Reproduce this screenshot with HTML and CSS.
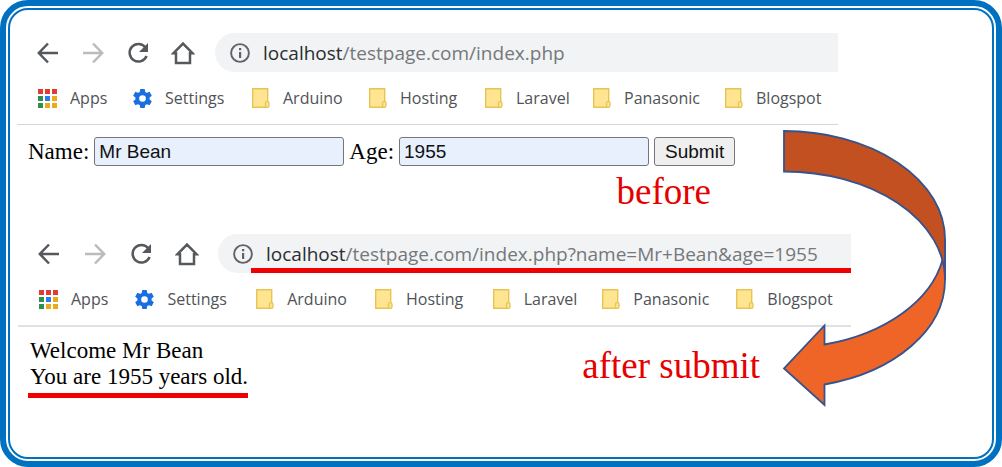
FILE: index.html
```html
<!DOCTYPE html>
<html lang="en">
<head>
<meta charset="utf-8">
<title>Form submit with GET</title>
<link rel="stylesheet" href="styles.css">
</head>
<body>
<svg class="sprite" aria-hidden="true">
  <symbol id="back" viewBox="0 0 24 24"><path d="M22 12H3.500M12 2.500 2.800 12l9.200 9.500" fill="none" stroke="currentColor" stroke-width="2.500"/></symbol>
  <symbol id="forward" viewBox="0 0 24 24"><path d="M2 12h18.500M12 2.500l9.200 9.500-9.200 9.500" fill="none" stroke="currentColor" stroke-width="2.500"/></symbol>
  <symbol id="reload" viewBox="0 0 24 24"><path d="M19.300 6.200A8.800 8.800 0 1 0 20.600 15" fill="none" stroke="currentColor" stroke-width="2.500"/><path d="M22 2v9h-9z" fill="currentColor"/></symbol>
  <symbol id="home" viewBox="0 0 24 24"><path d="M2.500 12.200 12 2.600l9.500 9.600H19V22H5v-9.800z" fill="none" stroke="currentColor" stroke-width="2.500"/></symbol>
  <symbol id="info" viewBox="0 0 20 20"><circle cx="10" cy="10" r="8.900" fill="none" stroke="currentColor" stroke-width="1.900"/><path d="M9 9h2.200v6H9zM9 5h2.200v2.200H9z" fill="currentColor"/></symbol>
  <symbol id="apps" viewBox="0 0 19 19">
    <path d="M0 0h5v5H0zM7 0h5v5H7zM14 0h5v5h-5z" fill="#e03a35"/>
    <path d="M0 7h5v5H0zM0 14h5v5H0z" fill="#2c9150"/>
    <path d="M7 7h5v5H7z" fill="#2a7de9"/>
    <path d="M14 7h5v5h-5zM7 14h5v5H7zM14 14h5v5h-5z" fill="#eda91c"/>
  </symbol>
  <symbol id="gear" viewBox="2 2 20 20"><path fill="#1a6fe0" d="M19.430 12.980c.04-.32.07-.64.07-.98s-.03-.66-.07-.98l2.110-1.650c.19-.15.24-.42.12-.64l-2-3.460c-.12-.22-.39-.3-.61-.22l-2.490 1c-.52-.4-1.080-.73-1.690-.98l-.38-2.650A.488.488 0 0 0 14 2h-4c-.25 0-.46.18-.49.42l-.38 2.650c-.61.25-1.170.59-1.690.98l-2.490-1c-.23-.09-.49 0-.61.22l-2 3.460c-.13.22-.07.49.12.64l2.110 1.650c-.04.32-.07.65-.07.98s.03.66.07.98l-2.110 1.650c-.19.15-.24.42-.12.64l2 3.460c.12.22.39.3.61.22l2.490-1c.52.4 1.080.73 1.690.98l.38 2.650c.03.24.24.42.49.42h4c.25 0 .46-.18.49-.42l.38-2.650c.61-.25 1.170-.59 1.690-.98l2.490 1c.23.09.49 0 .61-.22l2-3.460c.12-.22.07-.49-.12-.64zM12 15.500a3.500 3.500 0 1 1 0-7 3.500 3.500 0 0 1 0 7z"/></symbol>
  <symbol id="folder" viewBox="0 0 18 20"><path d="M.7.7h15v18.600H.7z" fill="#ffe592" stroke="#e6c552" stroke-width="1.400"/><rect x="13.500" y="13.700" width="3.500" height="5.600" rx="1.500" fill="#ffe592" stroke="#e6c552" stroke-width="1.300"/></symbol>
</svg>

<main class="frame">
  <div class="stage">
    <section class="browser browser-before">
      <div class="toolbar">
        <button class="nav" aria-label="Back"><svg><use href="#back"/></svg></button>
        <button class="nav" aria-label="Forward" disabled><svg><use href="#forward"/></svg></button>
        <button class="nav" aria-label="Reload"><svg><use href="#reload"/></svg></button>
        <button class="nav" aria-label="Home"><svg><use href="#home"/></svg></button>
        <div class="address"><svg class="info"><use href="#info"/></svg><span class="url"><span class="host">localhost</span>/testpage.com/index.php</span></div>
      </div>
      <nav class="bookmarks">
        <a href="#"><svg class="square"><use href="#apps"/></svg>Apps</a>
        <a href="#"><svg class="square"><use href="#gear"/></svg>Settings</a>
        <a href="#"><svg class="folder"><use href="#folder"/></svg>Arduino</a>
        <a href="#"><svg class="folder"><use href="#folder"/></svg>Hosting</a>
        <a href="#"><svg class="folder"><use href="#folder"/></svg>Laravel</a>
        <a href="#"><svg class="folder"><use href="#folder"/></svg>Panasonic</a>
        <a href="#"><svg class="folder"><use href="#folder"/></svg>Blogspot</a>
      </nav>
      <form class="form">
        <label for="name">Name:</label>
        <input id="name" type="text" value="Mr Bean">
        <label for="age">Age:</label>
        <input id="age" type="text" value="1955">
        <button class="submit" type="button">Submit</button>
      </form>
      <p class="note note-before">before</p>
    </section>

    <section class="browser browser-after">
      <div class="toolbar">
        <button class="nav" aria-label="Back"><svg><use href="#back"/></svg></button>
        <button class="nav" aria-label="Forward" disabled><svg><use href="#forward"/></svg></button>
        <button class="nav" aria-label="Reload"><svg><use href="#reload"/></svg></button>
        <button class="nav" aria-label="Home"><svg><use href="#home"/></svg></button>
        <div class="address marked"><svg class="info"><use href="#info"/></svg><span class="url"><span class="host">localhost</span>/testpage.com/index.php?name=Mr+Bean&amp;age=1955</span></div>
      </div>
      <nav class="bookmarks">
        <a href="#"><svg class="square"><use href="#apps"/></svg>Apps</a>
        <a href="#"><svg class="square"><use href="#gear"/></svg>Settings</a>
        <a href="#"><svg class="folder"><use href="#folder"/></svg>Arduino</a>
        <a href="#"><svg class="folder"><use href="#folder"/></svg>Hosting</a>
        <a href="#"><svg class="folder"><use href="#folder"/></svg>Laravel</a>
        <a href="#"><svg class="folder"><use href="#folder"/></svg>Panasonic</a>
        <a href="#"><svg class="folder"><use href="#folder"/></svg>Blogspot</a>
      </nav>
      <div class="result">
        <p class="message">Welcome Mr Bean<br>You are 1955 years old.</p>
        <p class="note note-after">after submit</p>
      </div>
    </section>

    <svg class="arrow" viewBox="0 0 170 290" aria-hidden="true">
      <g stroke="#35538c" stroke-width="1.800">
        <path fill="#ef6427" d="M165 117V158A161 108 0 0 1 44.500 262.500V283L4 246.500 44.500 203.500V222.500A161 108 0 0 0 162.500 138z"/>
        <path fill="#c25020" d="M4 9A161 108 0 0 1 165 117V158A161 108 0 0 0 4 49.500z"/>
      </g>
    </svg>
  </div>
</main>
</body>
</html>
```
FILE: styles.css
```css
* { box-sizing: border-box; }

body {
  margin: 0;
  background: #fff;
  font-family: "Liberation Serif", "Times New Roman", serif;
  color: #000;
}

p { margin: 0; }

.sprite { position: absolute; width: 0; height: 0; }

.frame {
  display: flex;
  min-height: 100vh;
  padding: 2px;
  border: 6px solid #0070c0;
  border-radius: 28px;
}

.stage {
  position: relative;
  flex: 1;
  padding: 23px 0 20px 7px;
  border: 2px solid #0070c0;
  border-radius: 20px;
}

.browser-before { --gap: 21px; --bar-gap: 20px; margin-right: 154px; }
.browser-after { --gap: 22px; --bar-gap: 19px; margin: 21px 141px 0 1px; }

.toolbar {
  display: flex;
  align-items: center;
  padding-left: 19px;
}

.nav {
  width: 24px;
  height: 24px;
  padding: 0;
  border: 0;
  background: none;
  color: #55585c;
}

.nav + .nav { margin-left: var(--gap); }
.nav:disabled { color: #b9bbbd; }
.nav svg { display: block; width: 24px; height: 24px; }

.address {
  position: relative;
  flex: 1;
  display: flex;
  align-items: center;
  gap: 13px;
  height: 39px;
  margin-left: var(--bar-gap);
  padding-left: 15px;
  border-radius: 20px 0 0 20px;
  background: #f1f3f4;
}

.marked::after {
  content: "";
  position: absolute;
  left: 33px;
  right: 0;
  bottom: 0;
  height: 5px;
  background: #f00000;
}

.info { width: 20px; height: 20px; color: #5f6368; }

.url {
  font-family: "Open Sans", "Noto Sans", sans-serif;
  font-size: 19px;
  line-height: 26px;
  white-space: nowrap;
  color: #75787b;
}

.host { color: #2b2d30; }

.bookmarks {
  display: grid;
  grid-template-columns: 95fr 119fr 117fr 116fr 108fr 132fr 113fr;
  align-items: center;
  height: 53px;
  padding-left: 21px;
  border-bottom: 1px solid #d5d6d8;
}

.browser-after .bookmarks { height: 54px; border-bottom: 2px solid #e0e1e2; }

.bookmarks a {
  display: flex;
  align-items: center;
  gap: 13px;
  min-width: 0;
  font-family: "Open Sans", "Noto Sans", sans-serif;
  font-size: 16px;
  line-height: 24px;
  white-space: nowrap;
  text-decoration: none;
  color: #505357;
}

.square { flex: none; width: 19px; height: 19px; }
.folder { flex: none; width: 18px; height: 20px; }

.form {
  display: flex;
  align-items: center;
  gap: 5px;
  padding: 12px 0 0 11px;
  font-size: 23px;
  line-height: 26px;
}

.form input,
.submit {
  height: 29px;
  border: 1px solid #767679;
  border-radius: 3px;
  font-family: "Liberation Sans", Arial, sans-serif;
  font-size: 19px;
  color: #111;
}

.form input {
  width: 250px;
  padding: 0 4px;
  background: #e8f0fe;
}

.submit { padding: 0 10px; background: #efefef; }

.note {
  font-size: 37px;
  line-height: 42px;
  color: #e60000;
}

.note-before { margin: 5px 127px 0 0; text-align: right; }

.result {
  display: flex;
  justify-content: space-between;
  align-items: flex-start;
  padding: 11px 91px 0 10px;
}

.message {
  padding: 0 0 3px 2px;
  border-bottom: 5px solid #f00000;
  font-size: 23px;
  line-height: 26px;
}

.note-after { margin-top: 7px; }

.arrow {
  position: absolute;
  top: 112px;
  right: 42px;
  width: 170px;
  height: 290px;
}
```
